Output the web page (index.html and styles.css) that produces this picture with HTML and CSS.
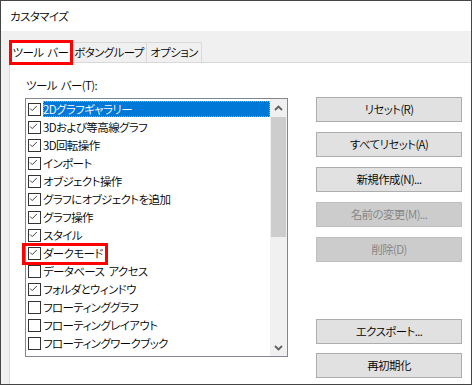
FILE: index.html
```html
<!DOCTYPE html>
<html lang="ja">
<head>
<meta charset="utf-8">
<link rel="stylesheet" href="styles.css">
</head>
<body>
<div class="window">
  <div class="titlebar">カスタマイズ</div>
  <div class="body">
    <div class="tabs">
      <div class="tab active">ツール バー</div>
      <div class="tab t2">ボタングループ</div>
      <div class="tab t3">オプション</div>
    </div>
    <div class="panel">
      <div class="left">
        <div class="label">ツール バー(T):</div>
        <div class="listbox">
          <div class="items">
            <div class="item"><span class="cb on"><svg viewBox="0 0 13 13"><polyline points="2.5,6.5 5,9 10.5,3.5"/></svg></span><span class="txt sel">2Dグラフギャラリー</span></div>
            <div class="item"><span class="cb on"><svg viewBox="0 0 13 13"><polyline points="2.5,6.5 5,9 10.5,3.5"/></svg></span><span class="txt">3Dおよび等高線グラフ</span></div>
            <div class="item"><span class="cb on"><svg viewBox="0 0 13 13"><polyline points="2.5,6.5 5,9 10.5,3.5"/></svg></span><span class="txt">3D回転操作</span></div>
            <div class="item"><span class="cb on"><svg viewBox="0 0 13 13"><polyline points="2.5,6.5 5,9 10.5,3.5"/></svg></span><span class="txt">インポート</span></div>
            <div class="item"><span class="cb on"><svg viewBox="0 0 13 13"><polyline points="2.5,6.5 5,9 10.5,3.5"/></svg></span><span class="txt">オブジェクト操作</span></div>
            <div class="item"><span class="cb on"><svg viewBox="0 0 13 13"><polyline points="2.5,6.5 5,9 10.5,3.5"/></svg></span><span class="txt">グラフにオブジェクトを追加</span></div>
            <div class="item"><span class="cb on"><svg viewBox="0 0 13 13"><polyline points="2.5,6.5 5,9 10.5,3.5"/></svg></span><span class="txt">グラフ操作</span></div>
            <div class="item"><span class="cb on"><svg viewBox="0 0 13 13"><polyline points="2.5,6.5 5,9 10.5,3.5"/></svg></span><span class="txt">スタイル</span></div>
            <div class="item"><span class="cb on"><svg viewBox="0 0 13 13"><polyline points="2.5,6.5 5,9 10.5,3.5"/></svg></span><span class="txt">ダークモード</span></div>
            <div class="item"><span class="cb"></span><span class="txt">データベース アクセス</span></div>
            <div class="item"><span class="cb on"><svg viewBox="0 0 13 13"><polyline points="2.5,6.5 5,9 10.5,3.5"/></svg></span><span class="txt">フォルダとウィンドウ</span></div>
            <div class="item"><span class="cb"></span><span class="txt">フローティンググラフ</span></div>
            <div class="item"><span class="cb"></span><span class="txt">フローティングレイアウト</span></div>
            <div class="item"><span class="cb"></span><span class="txt">フローティングワークブック</span></div>
          </div>
          <div class="scrollbar">
            <div class="sb-btn"><svg viewBox="0 0 9 6"><polyline points="1,5 4.5,1.5 8,5"/></svg></div>
            <div class="track"><div class="thumb"></div></div>
            <div class="sb-btn"><svg viewBox="0 0 9 6"><polyline points="1,1 4.5,4.5 8,1"/></svg></div>
          </div>
        </div>
      </div>
      <div class="right">
        <div class="btn">リセット(R)</div>
        <div class="btn">すべてリセット(A)</div>
        <div class="btn">新規作成(N)...</div>
        <div class="btn disabled">名前の変更(M)...</div>
        <div class="btn disabled">削除(D)</div>
        <div class="btn export">エクスポート...</div>
        <div class="btn">再初期化</div>
      </div>
    </div>
  </div>
  <div class="mark mark-tab"></div>
  <div class="mark mark-item"></div>
</div>
</body>
</html>
```
FILE: styles.css
```css
* { box-sizing: border-box; }
html, body { margin: 0; padding: 0; background: #fff; }
body {
  width: 473px;
  height: 386px;
  overflow: hidden;
  font-family: "Noto Sans CJK JP", "Noto Sans", sans-serif;
  font-size: 11.5px;
  font-weight: 350;
  letter-spacing: -0.6px;
  word-spacing: 2px;
  font-feature-settings: "palt";
  color: #000;
}
.window {
  position: relative;
  width: 472px;
  height: 385px;
  border: 1px solid #454545;
  display: flex;
  flex-direction: column;
  background: #fff;
}
.titlebar {
  height: 30px;
  line-height: 31px;
  padding-left: 9px;
  background: #fff;
  flex: none;
}
.body {
  flex: 1;
  background: #f0f0f0;
  padding: 9px 0 0 8px;
  display: flex;
  flex-direction: column;
  min-height: 0;
}
.tabs {
  display: flex;
  align-items: flex-end;
  height: 22px;
  flex: none;
}
.tab {
  height: 20px;
  line-height: 19px;
  border: 1px solid #d9d9d9;
  border-bottom: none;
  background: #f0f0f0;
  text-align: center;
  white-space: nowrap;
}
.tab.active {
  height: 23px;
  line-height: 22px;
  width: 63px;
  background: #fff;
  margin-bottom: -1px;
  position: relative;
  z-index: 1;
}
.tab.t2 { width: 75px; border-left: none; }
.tab.t3 { width: 55px; border-left: none; }
.panel {
  flex: 1;
  background: #fff;
  border-top: 1px solid #d9d9d9;
  border-left: 1px solid #d9d9d9;
  display: flex;
  min-height: 0;
}
.left {
  padding: 14px 0 0 15px;
  width: 279px;
  flex: none;
}
.label {
  height: 16px;
  line-height: 16px;
  margin-left: 1px;
  margin-bottom: 5px;
}
.listbox {
  width: 263px;
  height: 259px;
  border: 1px solid #828790;
  display: flex;
  overflow: hidden;
}
.items {
  width: 244px;
  flex: none;
  overflow: hidden;
}
.item {
  height: 18px;
  display: flex;
  align-items: flex-start;
}
.cb {
  width: 13px;
  height: 13px;
  margin: 4px 2px 0 2px;
  border: 1px solid #333;
  background: #fff;
  flex: none;
  display: flex;
}
.cb svg {
  width: 11px;
  height: 11px;
  margin: -1px;
  overflow: visible;
}
.cb svg polyline {
  fill: none;
  stroke: #333;
  stroke-width: 1.1;
}
.txt {
  height: 16px;
  line-height: 16px;
  margin-top: 2px;
  white-space: nowrap;
  padding-right: 2px;
}
.txt.sel {
  flex: 1;
  background: #0078d7;
  color: #fff;
  outline: 1px dotted #f5a030;
  outline-offset: -1px;
}
.scrollbar {
  width: 17px;
  flex: none;
  background: #f0f0f0;
  display: flex;
  flex-direction: column;
}
.sb-btn {
  height: 17px;
  display: flex;
  align-items: center;
  justify-content: center;
  flex: none;
}
.sb-btn svg { width: 9px; height: 6px; }
.sb-btn svg polyline { fill: none; stroke: #606060; stroke-width: 1.8; }
.track {
  flex: 1;
  padding: 1px 1px 0 1px;
}
.thumb {
  height: 120px;
  background: #cdcdcd;
}
.right {
  padding-top: 34px;
  margin-left: 27px;
  width: 146px;
  display: flex;
  flex-direction: column;
}
.btn {
  height: 25px;
  line-height: 23px;
  border: 1px solid #adadad;
  background: #e1e1e1;
  text-align: center;
  margin-bottom: 10px;
}
.btn.disabled {
  background: #cccccc;
  border-color: #bfbfbf;
  color: #838383;
}
.btn.export { margin-top: 47px; margin-bottom: 9px; }
.mark {
  position: absolute;
  border: 3px solid #ff0000;
  z-index: 5;
}
.mark-tab { left: 8px; top: 39px; width: 64px; height: 25px; }
.mark-item { left: 21px; top: 242px; width: 86px; height: 22px; }
```
